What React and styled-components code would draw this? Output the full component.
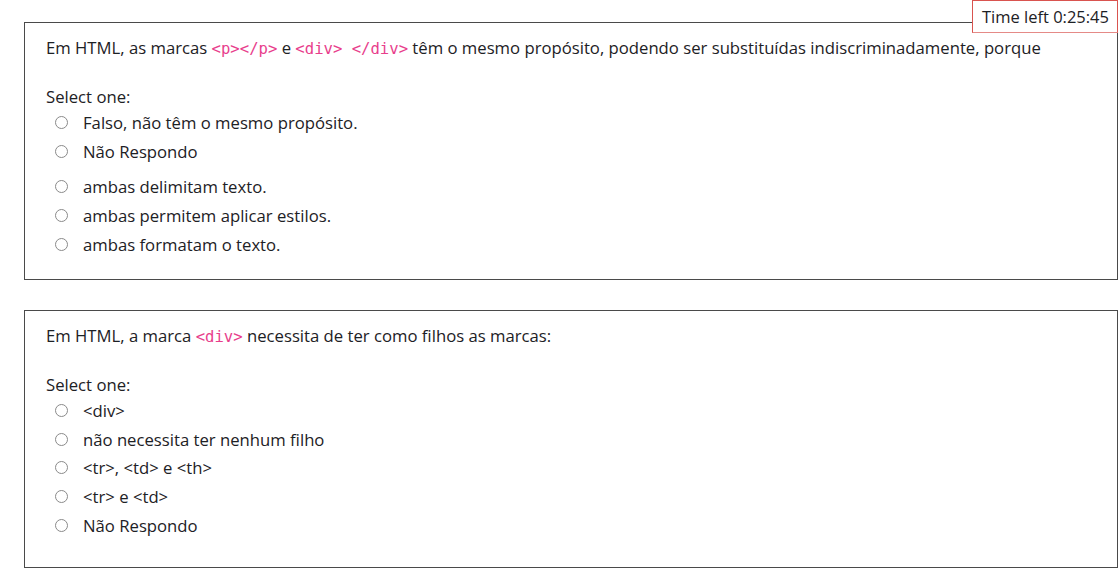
import React from "react";
import styled, { createGlobalStyle } from "styled-components";

const GlobalStyle = createGlobalStyle`
  html, body {
    margin: 0;
    padding: 0;
    background: #fff;
  }
  body {
    font-family: "Open Sans", "Noto Sans", sans-serif;
    font-size: 16.7px;
    color: #1d2125;
  }
`

const Page = styled.div`
  position: relative;
  padding: 22px 1px 0 24px;
`

const Timer = styled.div`
  position: absolute;
  top: 0;
  right: 1px;
  height: 33px;
  box-sizing: border-box;
  padding: 0 8px 0 9px;
  display: flex;
  align-items: center;
  background: #fff;
  border: 1px solid #d9534f;
  border-bottom-color: #e58a87;
  font-size: 16.5px;
  color: #1d2125;
  z-index: 2;
`

const Card = styled.div`
  box-sizing: border-box;
  min-height: 258px;
  border: 1px solid #4a4a4a;
  padding: 14px 21px 20px 21px;
  margin-bottom: 30px;

  &:last-of-type {
    margin-bottom: 0;
  }
`

const Question = styled.div`
  line-height: 22.5px;
  margin-bottom: 25px;
`

const Code = styled.code`
  font-family: "DejaVu Sans Mono", "Liberation Mono", monospace;
  font-size: 15.6px;
  color: #e83e8c;
`

const Prompt = styled.div`
  line-height: 22.5px;
`

const Options = styled.div`
  display: flex;
  flex-direction: column;
`

const Option = styled.label`
  display: flex;
  align-items: center;
  height: ${props => props.$tight ? '28.75px' : '29px'};
  padding-left: 9px;
  margin-top: ${props => props.$gap ? '6px' : '0'};
`

const Radio = styled.span`
  width: 11px;
  height: 11px;
  border: 1px solid #8a8a8a;
  border-radius: 50%;
  margin-right: 15px;
  flex-shrink: 0;
`

const questions = [
  {
    text: <>Em HTML, as marcas <Code>&lt;p&gt;&lt;/p&gt;</Code> e <Code>&lt;div&gt;&nbsp;&lt;/div&gt;</Code> têm o mesmo propósito, podendo ser substituídas indiscriminadamente, porque</>,
    options: [
      "Falso, não têm o mesmo propósito.",
      "Não Respondo",
      "ambas delimitam texto.",
      "ambas permitem aplicar estilos.",
      "ambas formatam o texto.",
    ],
    gapAt: 2,
  },
  {
    text: <>Em HTML, a marca <Code>&lt;div&gt;</Code> necessita de ter como filhos as marcas:</>,
    options: [
      "<div>",
      "não necessita ter nenhum filho",
      "<tr>, <td> e <th>",
      "<tr> e <td>",
      "Não Respondo",
    ],
    gapAt: -1,
  },
]

export default function App() {
  return (
    <>
      <GlobalStyle />
      <Page>
        <Timer>Time left 0:25:45</Timer>
        {questions.map((q, i) => (
          <Card key={i}>
            <Question>{q.text}</Question>
            <Prompt>Select one:</Prompt>
            <Options>
              {q.options.map((o, j) => (
                <Option key={j} $gap={j === q.gapAt} $tight={q.gapAt < 0}>
                  <Radio />
                  {o}
                </Option>
              ))}
            </Options>
          </Card>
        ))}
      </Page>
    </>
  )
}
